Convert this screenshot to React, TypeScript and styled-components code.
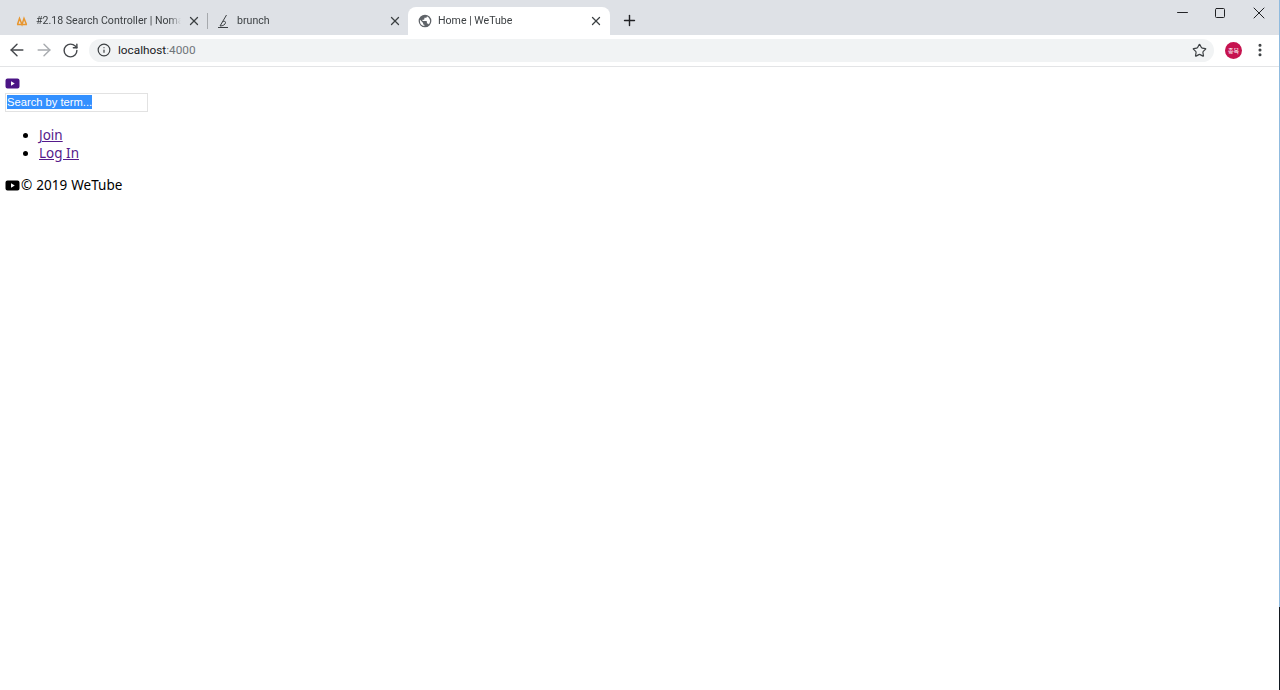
import * as React from 'react';
import styled, { createGlobalStyle } from 'styled-components';
import { ArrowLeft, ArrowRight, RotateCw, Info, Star, X, Plus, Minus, Square, EllipsisVertical } from 'lucide-react';

const Global = createGlobalStyle`
  html, body { margin: 0; padding: 0; background: #fff; height: 100%; overflow: hidden; }
  #root { height: 100%; }
`;

const Window = styled.div`
  width: 1280px;
  height: 690px;
  display: flex;
  flex-direction: column;
  position: relative;
  overflow: hidden;
  font-family: "Noto Sans", "Open Sans", sans-serif;
`;

const TabStrip = styled.div`
  height: 35px;
  flex: none;
  background: #dee1e6;
  display: flex;
  align-items: flex-end;
  padding-left: 7px;
`;

const Tab = styled.div<{ $active?: boolean; $width: number }>`
  width: ${p => p.$width}px;
  height: 28px;
  flex: none;
  box-sizing: border-box;
  display: flex;
  align-items: center;
  padding: 0 ${p => (p.$active ? 7 : 6)}px 0 ${p => (p.$active ? 10 : 9)}px;
  gap: 6px;
  border-radius: 8px 8px 0 0;
  background: ${p => (p.$active ? '#fff' : 'transparent')};
  color: #3c4043;
  font: 10.6px/16px Roboto, sans-serif;
`;

const TabTitle = styled.span`
  flex: 1;
  min-width: 0;
  overflow: hidden;
  white-space: nowrap;
  -webkit-mask-image: linear-gradient(to right, #000 92%, transparent);
  mask-image: linear-gradient(to right, #000 92%, transparent);
`;

const TabIcon = styled.svg`
  width: 14px;
  height: 14px;
  flex: none;
`;

const TabClose = styled(X)`
  flex: none;
  color: #3c4043;
`;

const TabDivider = styled.div`
  width: 1px;
  height: 16px;
  margin: 0 0 6px;
  background: #a6a9ad;
  flex: none;
`;

const NewTab = styled.div`
  margin: 0 0 6px 11px;
  display: flex;
  color: #202124;
`;

const WindowControls = styled.div`
  margin-left: auto;
  align-self: flex-start;
  display: flex;
  align-items: center;
  height: 25px;
  gap: 23px;
  padding-right: 11px;
  color: #202124;
`;

const Toolbar = styled.div`
  height: 32px;
  flex: none;
  box-sizing: border-box;
  border-bottom: 1px solid #e3e4e6;
  display: flex;
  align-items: center;
  padding: 0 0 1px 3px;
`;

const NavButton = styled.div<{ $disabled?: boolean }>`
  width: 27px;
  height: 20px;
  display: flex;
  align-items: center;
  justify-content: center;
  color: ${p => (p.$disabled ? '#a8abaf' : '#45484c')};
`;

const Omnibox = styled.div`
  margin-left: 5px;
  width: 1125px;
  height: 23px;
  flex: none;
  box-sizing: border-box;
  border-radius: 12px;
  background: #f1f3f4;
  display: flex;
  align-items: center;
  padding: 0 7px 0 8px;
  font: 11.8px/16px Roboto, sans-serif;
  color: #202124;
`;

const Url = styled.span`
  margin-left: 7px;
  flex: 1;
`;

const UrlPort = styled.span`
  color: #70757a;
`;

const Avatar = styled.div`
  width: 17px;
  height: 17px;
  margin-left: 11px;
  border-radius: 50%;
  background: #c6134f;
  color: #fff;
  font-size: 6px;
  line-height: 17px;
  text-align: center;
  font-family: "Noto Sans CJK KR", sans-serif;
  flex: none;
`;

const MenuButton = styled.div`
  margin-left: 10px;
  display: flex;
  color: #3c4043;
`;

const Page = styled.div`
  flex: 1;
  padding: 11px 5px 0;
  color: #000;
  font-size: 13.5px;
  line-height: 18px;
`;

const Logo = styled.svg<{ $color: string }>`
  display: block;
  width: 15px;
  height: 11px;
  fill: ${p => p.$color};
`;

const LogoLink = styled.a`
  display: block;
  height: 15px;
`;

const SearchBox = styled.div`
  width: 143px;
  height: 19px;
  box-sizing: border-box;
  border: 1px solid #e2e2e2;
  padding: 0 1px;
  font: 11.2px/17px "Liberation Sans", Arial, sans-serif;
  color: #fff;
`;

const Selected = styled.span`
  background: #3390ff;
  display: inline-block;
  height: 14px;
  line-height: 14px;
  vertical-align: top;
  margin-top: 1px;
`;

const NavList = styled.ul`
  margin: 14px 0 0;
  padding: 0 0 0 34px;
  list-style: disc;
`;

const NavItem = styled.li``;

const NavLink = styled.a`
  color: #551a8b;
  text-decoration: underline;
`;

const Footer = styled.footer`
  margin-top: 14px;
  display: flex;
  align-items: center;
`;

const Copyright = styled.span`
  margin-left: 1px;
  word-spacing: 0.6px;
`;

const EdgeLine = styled.div`
  position: absolute;
  top: 0;
  right: 0;
  width: 1px;
  height: 100%;
  background: linear-gradient(to bottom, #90bbdf 607px, #111820 607px);
`;

const YoutubeMark = ({ color }: { color: string }) => (
  <Logo $color={color} viewBox="0 0 15 11">
    <path fillRule="evenodd" d="M2.5.5h10a2 2 0 0 1 2 2v6a2 2 0 0 1-2 2h-10a2 2 0 0 1-2-2v-6a2 2 0 0 1 2-2zM6 3.3v4.4l3.8-2.2z" />
  </Logo>
);

const App = () => (
  <>
    <Global />
    <Window>
      <TabStrip>
        <Tab $width={200}>
          <TabIcon viewBox="0 0 14 14" fill="none" stroke="#e8962f" strokeWidth="1.5">
            <path d="M1 10.5h10M1.500 10.500 3.500 4.500 6 10.500 8 4.500 10.500 10.500" />
          </TabIcon>
          <TabTitle>#2.18 Search Controller | Nomad</TabTitle>
          <TabClose size={14} strokeWidth={2.2} />
        </Tab>
        <TabDivider />
        <Tab $width={200}>
          <TabIcon viewBox="0 0 14 14" fill="none" stroke="#3c4043" strokeWidth="1">
            <path d="M1 13.500h10M9.500 1 3 12c3 0 5.500-1.500 5.500-3.500 0-1.500-2-1.500-3-.5" />
          </TabIcon>
          <TabTitle>brunch</TabTitle>
          <TabClose size={14} strokeWidth={2.2} />
        </Tab>
        <Tab $active $width={202}>
          <TabIcon viewBox="1 1 22 22" fill="#5f6368">
            <path d="M12 2a10 10 0 1 0 0 20 10 10 0 0 0 0-20zm-1 17.900A8 8 0 0 1 4 12c0-.6.1-1.200.2-1.800L9 15v1c0 1.100.9 2 2 2v1.900zm6.900-2.500c-.3-.8-1-1.400-1.900-1.400h-1v-3c0-.6-.4-1-1-1H8v-2h2c.6 0 1-.4 1-1V7h2c1.100 0 2-.9 2-2v-.4a8 8 0 0 1 2.900 12.800z" />
          </TabIcon>
          <TabTitle>Home | WeTube</TabTitle>
          <TabClose size={14} strokeWidth={2.2} />
        </Tab>
        <NewTab>
          <Plus size={17} strokeWidth={2} />
        </NewTab>
        <WindowControls>
          <Minus size={17} strokeWidth={1.4} />
          <Square size={12} strokeWidth={2} />
          <X size={20} strokeWidth={1.2} />
        </WindowControls>
      </TabStrip>
      <Toolbar>
        <NavButton><ArrowLeft size={20} strokeWidth={1.7} /></NavButton>
        <NavButton $disabled><ArrowRight size={20} strokeWidth={1.7} /></NavButton>
        <NavButton><RotateCw size={17} strokeWidth={2} /></NavButton>
        <Omnibox>
          <Info size={14} strokeWidth={2} color="#3c4043" />
          <Url>localhost<UrlPort>:4000</UrlPort></Url>
          <Star size={15} strokeWidth={1.9} color="#3c4043" />
        </Omnibox>
        <Avatar>종복</Avatar>
        <MenuButton><EllipsisVertical size={16} strokeWidth={2.6} /></MenuButton>
      </Toolbar>
      <Page>
        <LogoLink><YoutubeMark color="#4b1585" /></LogoLink>
        <SearchBox><Selected>Search by term...</Selected></SearchBox>
        <NavList>
          <NavItem><NavLink>Join</NavLink></NavItem>
          <NavItem><NavLink>Log In</NavLink></NavItem>
        </NavList>
        <Footer>
          <YoutubeMark color="#000" />
          <Copyright>© 2019 WeTube</Copyright>
        </Footer>
      </Page>
      <EdgeLine />
    </Window>
  </>
);

export default App;
